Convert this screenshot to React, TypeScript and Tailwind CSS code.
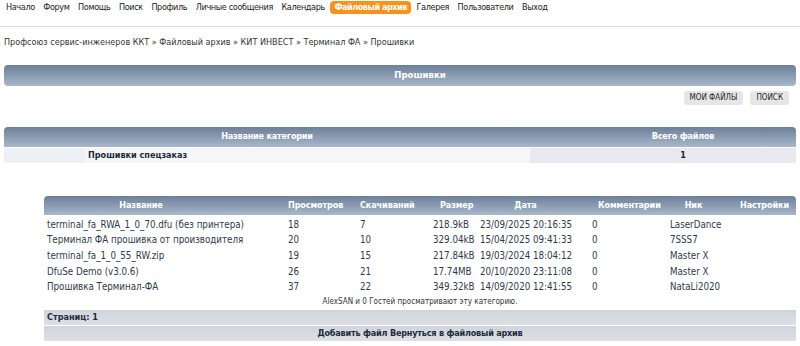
const nav = ['Начало', 'Форум', 'Помощь', 'Поиск', 'Профиль', 'Личные сообщения', 'Календарь', 'Файловый архив', 'Галерея', 'Пользователи', 'Выход']

const files = [
  { name: 'terminal_fa_RWA_1_0_70.dfu (без принтера)', views: 18, dl: 7, size: '218.9kB', date: '23/09/2025 20:16:35', com: 0, nick: 'LaserDance' },
  { name: 'Терминал ФА прошивка от производителя', views: 20, dl: 10, size: '329.04kB', date: '15/04/2025 09:41:33', com: 0, nick: '7SSS7' },
  { name: 'terminal_fa_1_0_55_RW.zip', views: 19, dl: 15, size: '217.84kB', date: '19/03/2024 18:04:12', com: 0, nick: 'Master X' },
  { name: 'DfuSe Demo (v3.0.6)', views: 26, dl: 21, size: '17.74MB', date: '20/10/2020 23:11:08', com: 0, nick: 'Master X' },
  { name: 'Прошивка Терминал-ФА', views: 37, dl: 22, size: '349.32kB', date: '14/09/2020 12:41:55', com: 0, nick: 'NataLi2020' },
]

const cols = 'grid grid-cols-[241px_72px_73px_47px_113px_76px_69px_61px]'

export default function App() {
  return (
    <div className="w-[800px] h-[346px] overflow-hidden bg-white text-[10px] text-[#333] font-['DejaVu_Sans_Condensed','DejaVu_Sans',sans-serif]">
      {/* top menu */}
      <div className="flex items-start gap-[8.5px] pl-[6px] pt-[1px] h-[27px] border-b border-[#dcdcdc] text-[9px] tracking-[-0.35px]">
        {nav.map(n => (
          <span key={n}
                className={n === 'Файловый архив'
                  ? 'px-[4px] -mx-[3px] h-[13px] leading-[13px] rounded-[4px] bg-[#f7931d] text-white font-bold tracking-[-0.45px]'
                  : 'h-[13px] leading-[13px] text-[#222]'}>
            {n}
          </span>
        ))}
      </div>

      {/* breadcrumb */}
      <div className="pl-[4px] mt-[9px] leading-[12px] text-[9px] text-[#333]">
        Профсоюз сервис-инженеров ККТ » Файловый архив » КИТ ИНВЕСТ » Терминал ФА » Прошивки
      </div>

      {/* title */}
      <div className="mx-[4px] mt-[17px] h-[21px] rounded-[4px] bg-gradient-to-b from-[#6c8099] to-[#a9b8cb] flex items-center justify-center pl-[40px] text-white font-bold text-[9.5px]">
        Прошивки
      </div>

      {/* buttons */}
      <div className="flex justify-end gap-[7px] pr-[11px] mt-[5px]">
        <span className="h-[14px] leading-[14px] px-[6px] rounded-[3px] bg-[#e6e6e6] text-[8px] text-[#222] uppercase">мои файлы</span>
        <span className="h-[14px] leading-[14px] px-[6px] rounded-[3px] bg-[#e6e6e6] text-[8px] text-[#222] uppercase">поиск</span>
      </div>

      {/* categories */}
      <div className="mx-[4px] mt-[22px]">
        <div className="flex h-[20px] rounded-t-[4px] bg-gradient-to-b from-[#6c8099] to-[#a9b8cb] text-white font-bold text-[9px] tracking-[-0.2px] items-center">
          <div className="w-[526px] text-center">Название категории</div>
          <div className="flex-1 text-center pl-[40px]">Всего файлов</div>
        </div>
        <div className="flex h-[15px] items-center mt-[1px] text-[9px]">
          <div className="w-[81px] h-full bg-[#eef1f4]" />
          <div className="w-[445px] h-full bg-[#f4f6f8] font-bold text-[#1d2b3c] pl-[3px] leading-[15px]">Прошивки спецзаказ</div>
          <div className="flex-1 h-full bg-[#e7e9ee] text-center pl-[40px] leading-[15px] font-bold text-[#222]">1</div>
        </div>
      </div>

      {/* files */}
      <div className="ml-[44px] mr-[4px] mt-[33px]">
        <div className={`${cols} h-[19px] items-center rounded-t-[4px] bg-gradient-to-b from-[#6c8099] to-[#a9b8cb] text-white font-bold text-[9px] tracking-[-0.1px]`}>
          <div className="text-center pr-[47px]">Название</div>
          <div className="pl-[3px]">Просмотров</div>
          <div className="pl-[3px]">Скачиваний</div>
          <div className="pl-[10px]">Размер</div>
          <div className="text-center pr-[16px]">Дата</div>
          <div className="pl-[8px]">Комментарии</div>
          <div className="text-center pr-[14px]">Ник</div>
          <div className="pl-[5px]">Настройки</div>
        </div>
        <div className="pt-[2px]">
          {files.map(f => (
            <div key={f.name} className={`${cols} h-[15.7px] items-center text-[9.7px] text-[#2c3a4a]`}>
              <div className="pl-[3px] whitespace-nowrap">{f.name}</div>
              <div className="pl-[3px]">{f.views}</div>
              <div className="pl-[3px]">{f.dl}</div>
              <div className="pl-[3px]">{f.size}</div>
              <div className="pl-[3px]">{f.date}</div>
              <div className="pl-[2px]">{f.com}</div>
              <div className="pl-[4px]">{f.nick}</div>
              <div />
            </div>
          ))}
        </div>
        <div className="text-center text-[8px] h-[12px] leading-[12px] mt-[1px]">AlexSAN и 0 Гостей просматривают эту категорию.</div>
        <div className="h-[15px] mt-[2px] bg-gradient-to-b from-[#d0d5dc] to-[#dde0e5] pl-[3px] leading-[15px] font-bold text-[9px] text-[#1d2b3c]">Страниц: 1</div>
        <div className="h-[15px] mt-[1px] bg-gradient-to-b from-[#d0d5dc] to-[#dde0e5] text-center leading-[15px] font-bold text-[9px] tracking-[-0.2px] text-[#1d2b3c]">Добавить файл Вернуться в файловый архив</div>
      </div>
    </div>
  )
}
